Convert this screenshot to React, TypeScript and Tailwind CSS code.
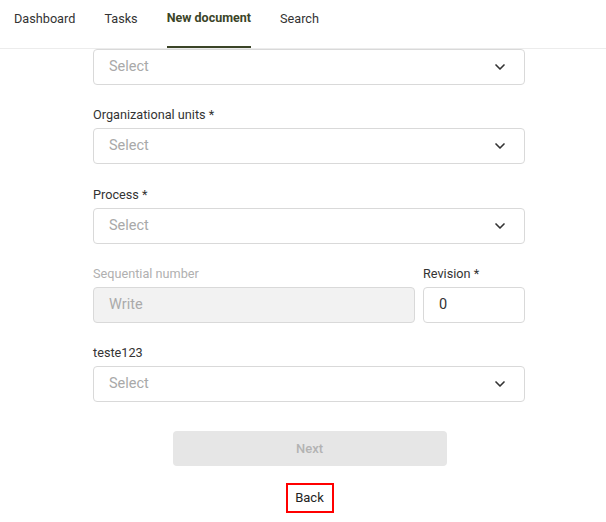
import { ChevronDown } from "lucide-react"

const tabs = ["Dashboard", "Tasks", "New document", "Search"]

const SelectField = ({ label }: { label?: string }) => (
  <div>
    {label && <label className="block mb-1 text-[12.7px] leading-[19px] text-[#333]">{label}</label>}
    <div className="flex items-center justify-between h-9 pl-[15px] pr-4 bg-white border border-[#d9d9d9] rounded">
      <span className="text-[14.5px] text-[#a9a9a9]">Select</span>
      <ChevronDown className="w-4 h-4 text-[#333]" strokeWidth={2.5} />
    </div>
  </div>
)

const App = () => {
  return (
    <div className="w-[606px] h-[522px] bg-white overflow-hidden font-['Roboto',sans-serif]">
      <nav className="flex h-[49px] border-b border-[#ececec] pl-[14px] gap-[29px]">
        {tabs.map((tab) => {
          const active = tab === "New document"
          return (
            <div
              key={tab}
              className={
                active
                  ? "flex items-center h-full text-[12.5px] font-bold text-[#3b4427] border-b-2 border-[#3b4427] pt-0.5 -mb-px"
                  : "flex items-center h-full text-[12.7px] text-[#333]"
              }
            >
              <span className="-mt-[11px]">{tab}</span>
            </div>
          )
        })}
      </nav>

      <div className="w-[432px] ml-[93px] flex flex-col">
        <div className="flex flex-col gap-5">
          <SelectField />
          <SelectField label="Organizational units *" />
          <div className="mt-px">
            <SelectField label="Process *" />
          </div>

          <div className="flex gap-2">
            <div className="flex-1">
              <label className="block mb-1 text-[12.7px] leading-[19px] text-[#b0b0b0]">Sequential number</label>
              <div className="flex items-center h-9 pl-[15px] bg-[#f2f2f2] border border-[#d9d9d9] rounded text-[14.5px] text-[#aaa]">
                Write
              </div>
            </div>
            <div className="w-[102px]">
              <label className="block mb-1 text-[12.7px] leading-[19px] text-[#333]">Revision *</label>
              <div className="flex items-center h-9 pl-[15px] bg-white border border-[#d9d9d9] rounded text-[14.5px] text-[#333]">
                0
              </div>
            </div>
          </div>

          <SelectField label="teste123" />
        </div>

        <div className="flex flex-col items-center mt-[29px] pl-px">
          <button className="w-[274px] h-[35px] bg-[#e6e6e6] rounded text-[13px] font-medium text-[#b3b3b3]">
            Next
          </button>
          <button className="mt-[17px] w-12 h-[30px] border-2 border-[#ff0000] text-[13px] text-[#222]">
            Back
          </button>
        </div>
      </div>
    </div>
  )
}

export default App
